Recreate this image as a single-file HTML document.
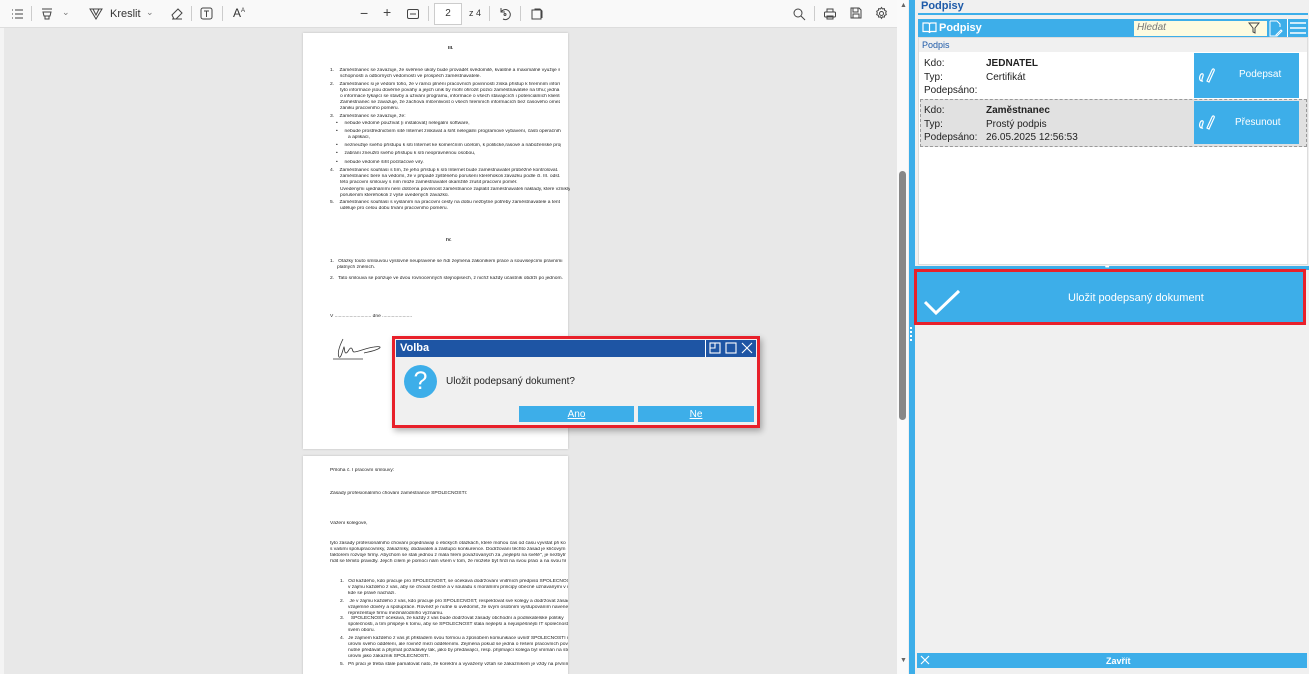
<!DOCTYPE html>
<html><head><meta charset="utf-8"><style>
*{margin:0;padding:0;box-sizing:border-box}
body{width:1309px;height:674px;overflow:hidden;background:#f0f0f0;font-family:"Liberation Sans","DejaVu Sans",sans-serif;position:relative}
.a{position:absolute}
.tb{left:0;top:0;width:897px;height:28px;background:#f9f9f9;border-bottom:1px solid #ddd;font-size:11px;color:#333}
.view{left:0;top:28px;width:897px;height:646px;background:#e8e8e8;overflow:hidden}
.page{background:#fff;box-shadow:0 0 2px #bbb}
.l{position:absolute;font-size:4.9px;line-height:5px;color:#222;white-space:nowrap;overflow:hidden}
.rp{left:915px;top:0;width:394px;height:674px;background:#f0f0f0}
.lbl{font-size:10px;color:#222}
.btn{background:#3daee9;color:#fff;font-size:10px}
</style></head><body>
<div class="a tb">
 <svg class="a" style="left:10px;top:7px" width="14" height="14" viewBox="0 0 14 14" stroke="#444" fill="none"><path d="M2 3h1M5 3h8M2 7h1M5 7h8M2 11h1M5 11h8"/></svg>
 <div class="a" style="left:31px;top:6px;width:1px;height:15px;background:#ccc"></div>
 <svg class="a" style="left:40px;top:7px" width="14" height="14" viewBox="0 0 14 14" stroke="#444" fill="none"><path d="M2 2h10M3 5h8l-1 4H4zM5 9v3h4V9"/></svg>
 <span class="a" style="left:62px;top:7px;font-size:9px;color:#777">⌄</span>
 <svg class="a" style="left:89px;top:7px" width="14" height="14" viewBox="0 0 14 14" stroke="#444" fill="none"><path d="M1 2h12L7 12zM4 2l3 6 3-6"/></svg>
 <span class="a" style="left:110px;top:8px">Kreslit</span>
 <span class="a" style="left:146px;top:7px;font-size:9px;color:#777">⌄</span>
 <svg class="a" style="left:169px;top:6px" width="15" height="15" viewBox="0 0 15 15" stroke="#444" fill="none"><path d="M3 9l6-6 4 4-6 6H5zM3 13h10"/></svg>
 <div class="a" style="left:191px;top:6px;width:1px;height:15px;background:#ccc"></div>
 <svg class="a" style="left:199px;top:6px" width="15" height="15" viewBox="0 0 15 15" stroke="#444" fill="none"><rect x="2" y="2" width="11" height="11" rx="2"/><path d="M5 5h5M7.5 5v6"/></svg>
 <div class="a" style="left:222px;top:6px;width:1px;height:15px;background:#ccc"></div>
 <span class="a" style="left:233px;top:6px;font-size:12px">A<sup style="font-size:6px">A</sup></span>
 <span class="a" style="left:360px;top:5px;font-size:14px;color:#444">−</span>
 <span class="a" style="left:383px;top:4px;font-size:14px;color:#444">+</span>
 <svg class="a" style="left:406px;top:7px" width="14" height="14" viewBox="0 0 14 14" stroke="#444" fill="none"><rect x="1.5" y="2.5" width="11" height="9" rx="1.5"/><path d="M4 7h6"/></svg>
 <div class="a" style="left:428px;top:6px;width:1px;height:15px;background:#ccc"></div>
 <div class="a" style="left:434px;top:3px;width:28px;height:22px;border:1px solid #ccc;background:#fff;text-align:center;line-height:20px;font-size:10px">2</div>
 <span class="a" style="left:469px;top:8px;font-size:9px">z 4</span>
 <div class="a" style="left:489px;top:6px;width:1px;height:15px;background:#ccc"></div>
 <svg class="a" style="left:498px;top:7px" width="14" height="14" viewBox="0 0 14 14" stroke="#444" fill="none"><path d="M3 5a5 5 0 1 1 2 7M3 1v4h4"/><circle cx="7" cy="7.5" r="1"/></svg>
 <div class="a" style="left:520px;top:6px;width:1px;height:15px;background:#ccc"></div>
 <svg class="a" style="left:530px;top:7px" width="14" height="14" viewBox="0 0 14 14" stroke="#444" fill="none"><rect x="2" y="3" width="9" height="9"/><path d="M5 3V2h5l2 2v7"/></svg>
 <svg class="a" style="left:792px;top:7px" width="14" height="14" viewBox="0 0 14 14" stroke="#444" fill="none"><circle cx="6" cy="6" r="4"/><path d="M9 9l4 4"/></svg>
 <div class="a" style="left:814px;top:6px;width:1px;height:15px;background:#ccc"></div>
 <svg class="a" style="left:823px;top:7px" width="14" height="14" viewBox="0 0 14 14" stroke="#444" fill="none"><rect x="1.5" y="5" width="11" height="5" rx="1"/><path d="M4 5V2h6v3M4 9h6v3H4z"/></svg>
 <svg class="a" style="left:849px;top:6px" width="14" height="14" viewBox="0 0 14 14" stroke="#444" fill="none"><path d="M2 2h8l2 2v8H2zM4 2v4h5V2M4 12V8h6v4"/></svg>
 <svg class="a" style="left:874px;top:6px" width="15" height="15" viewBox="0 0 15 15" stroke="#444" fill="none"><circle cx="7.5" cy="7.5" r="2"/><path d="M7.5 1.5l1 1.5 1.8-.4.4 1.8 1.6.8-.6 1.7.6 1.7-1.6.8-.4 1.8-1.8-.4-1 1.5-1-1.5-1.8.4-.4-1.8-1.6-.8.6-1.7-.6-1.7 1.6-.8.4-1.8 1.8.4z"/></svg>
</div>

<div class="a view">
 <div class="a" style="left:0;top:0;width:4px;height:646px;background:#f4f4f4"></div>
 <div class="a page" style="left:303px;top:5px;width:265px;height:416px">
  <div class="l" style="left:145px;top:13px;font-weight:bold">III.</div>
  <div class="l" style="left:27px;top:35px;width:230px">1.&nbsp;&nbsp;&nbsp; Zaměstnanec se zavazuje, že svěřené úkoly bude provádět svědomitě, kvalitně a maximálně využije svých</div>
  <div class="l" style="left:37px;top:41px">schopností a odborných vědomostí ve prospěch zaměstnavatele.</div>
  <div class="l" style="left:27px;top:49px;width:230px">2.&nbsp;&nbsp;&nbsp; Zaměstnanec si je vědom toho, že v rámci plnění pracovních povinností získá přístup k firemním informacím, že</div>
  <div class="l" style="left:37px;top:55px;width:220px">tyto informace jsou důvěrné povahy a jejich únik by mohl ohrozit pozici zaměstnavatele na trhu; jedná se zejména</div>
  <div class="l" style="left:37px;top:61px;width:220px">o informace týkající se stavby a uživání programu, informace o všech stávajících i potenciálních klientech firmy.</div>
  <div class="l" style="left:37px;top:67px;width:220px">Zaměstnanec se zavazuje, že zachová mlčenlivost o všech firemních informacích bez časového omezení i po</div>
  <div class="l" style="left:37px;top:73px">zániku pracovního poměru.</div>
  <div class="l" style="left:27px;top:81px">3.&nbsp;&nbsp;&nbsp; Zaměstnanec se zavazuje, že:</div>
  <div class="l" style="left:33px;top:88px">•&nbsp;&nbsp;&nbsp;&nbsp; nebude vědomě používat (i instalovat) nelegální software,</div>
  <div class="l" style="left:33px;top:96px;width:225px">•&nbsp;&nbsp;&nbsp;&nbsp; nebude prostřednictvím sítě Internet získávat a šířit nelegální programové vybavení, části operačního systému</div>
  <div class="l" style="left:45px;top:102px">a aplikací,</div>
  <div class="l" style="left:33px;top:110px;width:225px">•&nbsp;&nbsp;&nbsp;&nbsp; nezneužije svého přístupu k síti Internet ke komerčním účelům, k politické,rasové a náboženské propagandě,</div>
  <div class="l" style="left:33px;top:118px">•&nbsp;&nbsp;&nbsp;&nbsp; zabrání zneužití svého přístupu k síti neoprávněnou osobou,</div>
  <div class="l" style="left:33px;top:127px">•&nbsp;&nbsp;&nbsp;&nbsp; nebude vědomě šířit počítačové viry.</div>
  <div class="l" style="left:27px;top:135px;width:230px">4.&nbsp;&nbsp;&nbsp; Zaměstnanec souhlasí s tím, že jeho přístup k síti Internet bude zaměstnavatel průběžně kontrolovat. Zároveň</div>
  <div class="l" style="left:37px;top:141px;width:220px">zaměstnanec bere na vědomí, že v případě zjištěného porušení kteréhokoli závazku podle čl. III. odst. 2 a 3</div>
  <div class="l" style="left:37px;top:147px">této pracovní smlouvy s ním může zaměstnavatel okamžitě zrušit pracovní poměr.</div>
  <div class="l" style="left:37px;top:154px">Uvedenými ujednáními není dotčena povinnost zaměstnance zaplatit zaměstnavateli náklady, které vznikly</div>
  <div class="l" style="left:37px;top:160px">porušením kteréhokoli z výše uvedených závazků.</div>
  <div class="l" style="left:27px;top:167px;width:230px">5.&nbsp;&nbsp;&nbsp; Zaměstnanec souhlasí s vysláním na pracovní cesty na dobu nezbytné potřeby zaměstnavatele a tento souhlas</div>
  <div class="l" style="left:37px;top:173px">uděluje pro celou dobu trvání pracovního poměru.</div>
  <div class="l" style="left:143px;top:205px;font-weight:bold">IV.</div>
  <div class="l" style="left:27px;top:226px;width:234px">1.&nbsp;&nbsp; Otázky touto smlouvou výslovně neupravené se řídí zejména zákoníkem práce a souvisejícími právními předpisy v</div>
  <div class="l" style="left:34px;top:232px">platných zněních.</div>
  <div class="l" style="left:27px;top:243px">2.&nbsp;&nbsp; Tato smlouva se pořizuje ve dvou rovnocenných stejnopisech, z nichž každý účastník obdrží po jednom.</div>
  <div class="l" style="left:27px;top:281px">V ........................... dne ......................</div>
  <svg class="a" style="left:28px;top:302px" width="56" height="30" viewBox="0 0 56 30" fill="none" stroke="#333" stroke-width="0.8"><path d="M12 4c-3 6-6 14-4 18 2 2 4-8 5-10 1 2 0 6 2 6s3-5 5-5 1 4 3 4c4 0 12-4 20-5 6-1 8 0 4 2-4 2-10 3-14 4M2 24h30" /></svg>
 </div>
 <div class="a page" style="left:303px;top:428px;width:265px;height:230px">
  <div class="l" style="left:27px;top:12px">Příloha č. I pracovní smlouvy:</div>
  <div class="l" style="left:27px;top:35px">Zásady profesionálního chování zaměstnance SPOLEČNOSTI:</div>
  <div class="l" style="left:27px;top:65px">Vážení kolegové,</div>
  <div class="l" style="left:27px;top:85px;width:236px">tyto zásady profesionálního chování pojednávají o etických otázkách, které mohou čas od času vyvstat při kontaktech</div>
  <div class="l" style="left:27px;top:91px;width:236px">s vašimi spolupracovníky, zákazníky, dodavateli a zástupci konkurence. Dodržování těchto zásad je klíčovým</div>
  <div class="l" style="left:27px;top:97px;width:236px">faktorem rozvoje firmy. Abychom se stali jednou z mála firem považovaných za „nejlepší na světě", je nezbytně nutné</div>
  <div class="l" style="left:27px;top:103px;width:236px">řídit se těmito pravidly. Jejich cílem je pomoci nám všem v tom, že můžete být hrdí na svou práci a na svou firmu.</div>
  <div class="l" style="left:37px;top:123px;width:228px">1.&nbsp;&nbsp; Od každého, kdo pracuje pro SPOLEČNOST, se očekává dodržování vnitřních předpisů SPOLEČNOSTI. Je</div>
  <div class="l" style="left:45px;top:129px;width:220px">v zájmu každého z vás, aby se choval čestně a v souladu s morálními principy obecně uznávanými v místě,</div>
  <div class="l" style="left:45px;top:135px">kde se právě nachází.</div>
  <div class="l" style="left:37px;top:143px;width:228px">2.&nbsp;&nbsp;&nbsp; Je v zájmu každého z vás, kdo pracuje pro SPOLEČNOST, respektovat své kolegy a dodržovat zásady</div>
  <div class="l" style="left:45px;top:149px;width:220px">vzájemné důvěry a spolupráce. Rovněž je nutné si uvědomit, že svým osobním vystupováním navenek</div>
  <div class="l" style="left:45px;top:155px">reprezentuje firmu mezinárodního významu.</div>
  <div class="l" style="left:37px;top:160px;width:228px">3.&nbsp;&nbsp;&nbsp;&nbsp; SPOLEČNOST očekává, že každý z vás bude dodržovat zásady obchodní a podnikatelské politiky</div>
  <div class="l" style="left:45px;top:166px;width:220px">společnosti, a tím přispěje k tomu, aby se SPOLEČNOST stala nejlepší a nejúspěšnější IT společností ve</div>
  <div class="l" style="left:45px;top:172px">svém oboru.</div>
  <div class="l" style="left:37px;top:180px;width:228px">4.&nbsp;&nbsp; Je zájmem každého z vás jít příkladem svou formou a způsobem komunikace uvnitř SPOLEČNOSTI nejen na</div>
  <div class="l" style="left:45px;top:186px;width:220px">úrovni svého oddělení, ale rovněž mezi odděleními. Zejména pokud se jedná o řešení pracovních povinností je</div>
  <div class="l" style="left:45px;top:192px;width:220px">nutné předávat a přijímat požadavky tak, jako by předávající, resp. přijímající kolega byl vnímán na stejné</div>
  <div class="l" style="left:45px;top:198px">úrovni jako zákazník SPOLEČNOSTI.</div>
  <div class="l" style="left:37px;top:206px;width:228px">5.&nbsp;&nbsp; Při práci je třeba stále pamatovat nato, že korektní a vyvážený vztah se zákazníkem je vždy na prvním místě.</div>
 </div>
</div>
<div class="a" style="left:897px;top:0;width:11px;height:674px;background:#fafafa"></div>
<div class="a" style="left:899px;top:171px;width:7px;height:249px;background:#888;border-radius:4px"></div>
<div class="a" style="left:900px;top:2px;font-size:7px;color:#666">▲</div>
<div class="a" style="left:900px;top:657px;font-size:7px;color:#666">▼</div>
<div class="a" style="left:909px;top:0;width:6px;height:674px;background:#3daee9"></div>
<div class="a" style="left:910px;top:327px;width:3px;height:14px;border-left:2px dotted #fff"></div>

<div class="a rp">
 <div class="a" style="left:6px;top:0;font-size:11px;font-weight:bold;color:#1e5aa8">Podpisy</div>
 <div class="a" style="left:3px;top:13px;width:390px;height:2px;background:#3daee9"></div>
 <div class="a" style="left:3px;top:19px;width:390px;height:18px;background:#3daee9"></div>
 <svg class="a" style="left:7px;top:21px" width="15" height="14" viewBox="0 0 15 14" stroke="#fff" fill="none" stroke-width="1.2"><path d="M1 2h5c1 0 1.5.5 1.5 1.5V12c0-1-.5-1.5-1.5-1.5H1zM14 2H9c-1 0-1.5.5-1.5 1.5V12c0-1 .5-1.5 1.5-1.5h5z"/></svg>
 <div class="a" style="left:24px;top:22px;font-size:11px;font-weight:bold;color:#fff">Podpisy</div>
 <div class="a" style="left:219px;top:21px;width:133px;height:15px;background:#fdfbe0;font-size:10px;font-style:italic;color:#777;padding:1px 3px">Hledat</div>
 <svg class="a" style="left:333px;top:22px" width="12" height="12" viewBox="0 0 12 12" stroke="#444" fill="none"><path d="M1 1h10L7 6v5L5 10V6z"/></svg>
 <svg class="a" style="left:353px;top:20px" width="15" height="17" viewBox="0 0 15 17" stroke="#fff" fill="none"><path d="M2 1h7l3 3v3M2 1v15h7M8 15l5-5 1 1-5 5H8z"/></svg>
 <div class="a" style="left:372px;top:19px;width:1px;height:18px;background:#fff"></div>
 <svg class="a" style="left:374px;top:21px" width="18" height="14" viewBox="0 0 18 14" stroke="#fff" stroke-width="1.4"><path d="M1 2h16M1 7h16M1 12h16"/></svg>
 <div class="a" style="left:3px;top:37px;width:390px;height:228px;background:#fff;border:1px solid #ddd"></div>
 <div class="a" style="left:4px;top:38px;width:388px;height:14px;background:#f0f0f0;font-size:9px;color:#1e5aa8;padding:2px 3px">Podpis</div>
 <div class="a lbl" style="left:9px;top:58px">Kdo:</div>
 <div class="a lbl" style="left:71px;top:58px;font-weight:bold">JEDNATEL</div>
 <div class="a lbl" style="left:9px;top:72px">Typ:</div>
 <div class="a lbl" style="left:71px;top:72px">Certifikát</div>
 <div class="a lbl" style="left:9px;top:85px">Podepsáno:</div>
 <div class="a btn" style="left:279px;top:53px;width:105px;height:45px"><svg class="a" style="left:4px;top:14px" width="18" height="17" viewBox="0 0 18 17" stroke="#fff" fill="none" stroke-width="1.2"><path d="M4 14c-2 0-3-2-2-5s4-3 3 0-2 6 0 5M9 14l5-11c1-2 3-1 2 1L11 15z"/></svg><span class="a" style="left:45px;top:16px">Podepsat</span></div>
 <div class="a" style="left:5px;top:99px;width:387px;height:48px;background:#e1e1e1;border:1px dashed #999"></div>
 <div class="a lbl" style="left:9px;top:105px">Kdo:</div>
 <div class="a lbl" style="left:71px;top:105px;font-weight:bold">Zaměstnanec</div>
 <div class="a lbl" style="left:9px;top:119px">Typ:</div>
 <div class="a lbl" style="left:71px;top:119px">Prostý podpis</div>
 <div class="a lbl" style="left:9px;top:132px">Podepsáno:</div>
 <div class="a lbl" style="left:71px;top:132px">26.05.2025 12:56:53</div>
 <div class="a btn" style="left:279px;top:101px;width:105px;height:43px"><svg class="a" style="left:4px;top:13px" width="18" height="17" viewBox="0 0 18 17" stroke="#fff" fill="none" stroke-width="1.2"><path d="M4 14c-2 0-3-2-2-5s4-3 3 0-2 6 0 5M9 14l5-11c1-2 3-1 2 1L11 15z"/></svg><span class="a" style="left:41px;top:16px">Přesunout</span></div>
 <div class="a" style="left:0;top:266px;width:394px;height:4px;background:#3daee9"></div>
 <div class="a" style="left:190px;top:265px;font-size:6px;color:#fff;letter-spacing:-1px">•••</div>
 <div class="a" style="left:-1px;top:269px;width:392px;height:56px;background:#3daee9;border:3px solid #e8202a"></div>
 <svg class="a" style="left:9px;top:289px" width="36" height="26" viewBox="0 0 36 26" stroke="#fff" fill="none" stroke-width="3"><path d="M1 13l11 11L35 2"/></svg>
 <div class="a" style="left:153px;top:292px;font-size:11px;color:#fff">Uložit podepsaný dokument</div>
 <div class="a" style="left:2px;top:653px;width:390px;height:15px;background:#3daee9"></div>
 <svg class="a" style="left:5px;top:655px" width="10" height="10" viewBox="0 0 10 10" stroke="#fff" stroke-width="1.2"><path d="M1 1l8 8M9 1l-8 8"/></svg>
 <div class="a" style="left:191px;top:656px;font-size:9px;color:#fff;font-weight:bold">Zavřít</div>
</div>

<div class="a" style="left:392px;top:336px;width:368px;height:92px;border:3px solid #e8202a;background:#f0f0f0;box-shadow:2px 3px 6px rgba(0,0,0,.3)">
 <div class="a" style="left:1px;top:1px;width:360px;height:17px;background:#1e55a4"></div>
 <div class="a" style="left:5px;top:3px;font-size:11px;font-weight:bold;color:#fff">Volba</div>
 <div class="a" style="left:310px;top:1px;width:1px;height:17px;background:#fff"></div>
 <svg class="a" style="left:314px;top:3px" width="44" height="13" viewBox="0 0 44 13" stroke="#fff" fill="none" stroke-width="1.1"><rect x="1" y="1" width="10" height="10"/><path d="M1 6h5V1"/><rect x="17" y="1" width="10" height="10"/><path d="M33 1l10 10M43 1L33 11"/></svg>
 <div class="a" style="left:9px;top:26px;width:33px;height:33px;border-radius:50%;background:#3daee9;color:#fff;font-size:25px;text-align:center;line-height:33px">?</div>
 <div class="a" style="left:51px;top:37px;font-size:10px;color:#222">Uložit podepsaný dokument?</div>
 <div class="a btn" style="left:124px;top:67px;width:115px;height:16px;text-align:center;line-height:18px;text-decoration:underline">Ano</div>
 <div class="a btn" style="left:243px;top:67px;width:116px;height:16px;text-align:center;line-height:18px;text-decoration:underline">Ne</div>
</div>
</body></html>
